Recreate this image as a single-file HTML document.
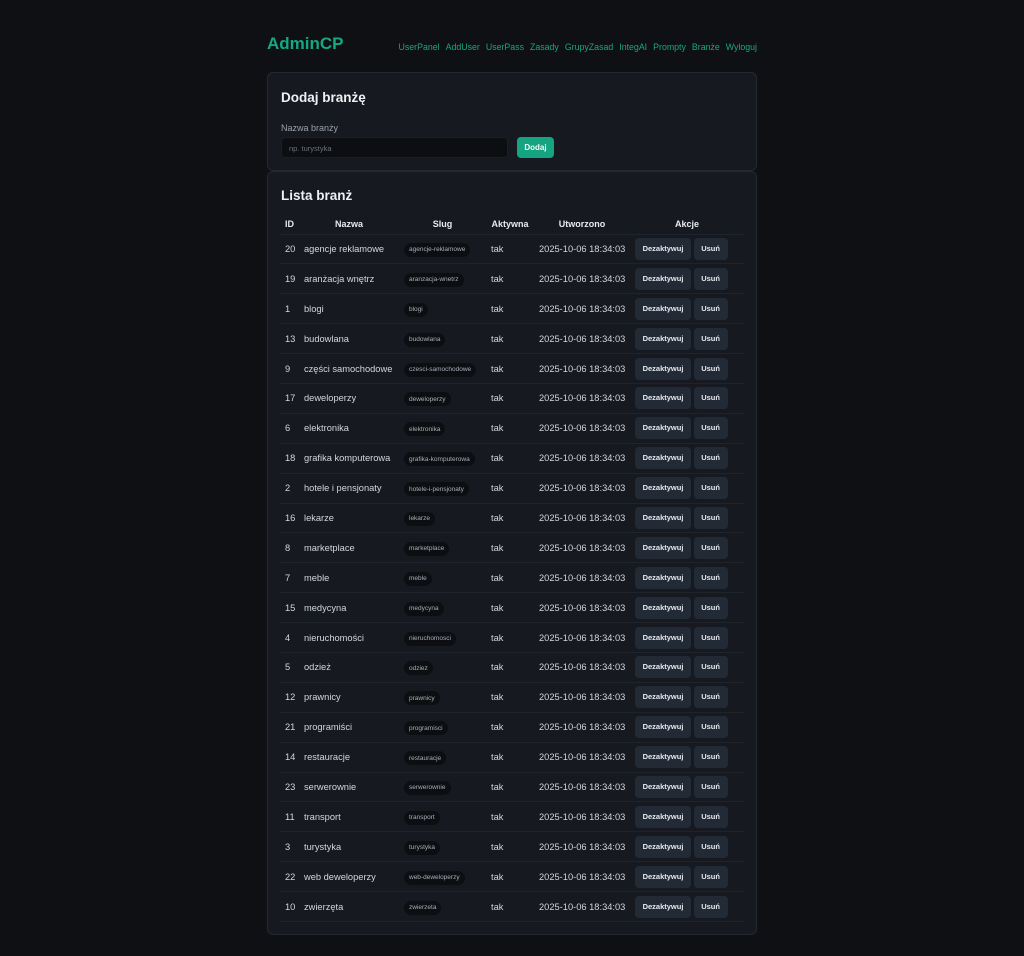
<!DOCTYPE html>
<html><head><meta charset="utf-8"><style>
*{box-sizing:border-box;margin:0;padding:0}
body{background:#0e1013;width:1024px;height:956px;font-family:"Liberation Sans","DejaVu Sans",sans-serif;color:#d6dae0;position:relative;overflow:hidden}
.logo{position:absolute;left:267px;top:34px;font-size:17px;font-weight:bold;color:#16a883}
.nav{position:absolute;right:267px;top:42px;font-size:8.8px;color:#16a883;display:flex;gap:6px;white-space:nowrap}
.card{position:absolute;left:267px;width:490px;background:#161a20;border:1px solid #232831;border-radius:6px}
h2{font-size:13.5px;font-weight:bold;color:#eef0f3}
.lbl{font-size:9px;color:#9aa1ab;position:absolute;left:13px;top:50px}
.inp{position:absolute;left:13px;top:64px;width:227px;height:21px;background:#0c0e11;border:1px solid #1b1f25;border-radius:4px;font-size:7.5px;color:#6d737c;padding:6px 7px}
.add{position:absolute;left:249px;top:64px;width:37px;height:21px;background:#15a480;border-radius:4px;font-size:8px;font-weight:bold;color:#f2fbf8;text-align:center;line-height:21px}
table{position:absolute;left:12px;top:42px;width:464px;border-collapse:collapse;table-layout:fixed;font-size:9.3px}
th{font-weight:bold;font-size:9px;color:#e8eaee;height:20px;text-align:center;border-bottom:1px solid #1f242b}
td{height:29.9px;padding:0 0 0 5px;border-bottom:1px solid #1f242b;white-space:nowrap;color:#d3d7dd;vertical-align:middle}
.slug{display:inline-flex;align-items:center;background:#0c0e11;border-radius:7px;font-size:6.5px;padding:0 5px;height:14px;color:#a9afb8;vertical-align:middle;position:relative;top:1px}
.b{display:inline-block;background:#222a36;border-radius:4px;font-size:7.5px;font-weight:bold;color:#e6e9ee;height:22px;line-height:22px;text-align:center;vertical-align:middle}
</style></head><body>
<div class="logo">AdminCP</div>
<div class="nav"><span>UserPanel</span><span>AddUser</span><span>UserPass</span><span>Zasady</span><span>GrupyZasad</span><span>IntegAI</span><span>Prompty</span><span>Branże</span><span>Wyloguj</span></div>
<div class="card" style="top:72px;height:99px">
<h2 style="position:absolute;left:13px;top:17px">Dodaj branżę</h2>
<div class="lbl">Nazwa branży</div>
<div class="inp">np. turystyka</div>
<div class="add">Dodaj</div>
</div>
<div class="card" style="top:171px;height:764px">
<h2 style="position:absolute;left:13px;top:16px">Lista branż</h2>
<table>
<colgroup><col style="width:19px"><col style="width:100px"><col style="width:87px"><col style="width:48px"><col style="width:96px"><col style="width:114px"></colgroup>
<tr><th>ID</th><th>Nazwa</th><th>Slug</th><th>Aktywna</th><th>Utworzono</th><th>Akcje</th></tr>
<tbody>
<tr><td>20</td><td>agencje reklamowe</td><td><span class="slug">agencje-reklamowe</span></td><td>tak</td><td>2025-10-06 18:34:03</td><td><span class="b" style="width:56px">Dezaktywuj</span> <span class="b" style="width:34px">Usuń</span></td></tr>
<tr><td>19</td><td>aranżacja wnętrz</td><td><span class="slug">aranzacja-wnetrz</span></td><td>tak</td><td>2025-10-06 18:34:03</td><td><span class="b" style="width:56px">Dezaktywuj</span> <span class="b" style="width:34px">Usuń</span></td></tr>
<tr><td>1</td><td>blogi</td><td><span class="slug">blogi</span></td><td>tak</td><td>2025-10-06 18:34:03</td><td><span class="b" style="width:56px">Dezaktywuj</span> <span class="b" style="width:34px">Usuń</span></td></tr>
<tr><td>13</td><td>budowlana</td><td><span class="slug">budowlana</span></td><td>tak</td><td>2025-10-06 18:34:03</td><td><span class="b" style="width:56px">Dezaktywuj</span> <span class="b" style="width:34px">Usuń</span></td></tr>
<tr><td>9</td><td>części samochodowe</td><td><span class="slug">czesci-samochodowe</span></td><td>tak</td><td>2025-10-06 18:34:03</td><td><span class="b" style="width:56px">Dezaktywuj</span> <span class="b" style="width:34px">Usuń</span></td></tr>
<tr><td>17</td><td>deweloperzy</td><td><span class="slug">deweloperzy</span></td><td>tak</td><td>2025-10-06 18:34:03</td><td><span class="b" style="width:56px">Dezaktywuj</span> <span class="b" style="width:34px">Usuń</span></td></tr>
<tr><td>6</td><td>elektronika</td><td><span class="slug">elektronika</span></td><td>tak</td><td>2025-10-06 18:34:03</td><td><span class="b" style="width:56px">Dezaktywuj</span> <span class="b" style="width:34px">Usuń</span></td></tr>
<tr><td>18</td><td>grafika komputerowa</td><td><span class="slug">grafika-komputerowa</span></td><td>tak</td><td>2025-10-06 18:34:03</td><td><span class="b" style="width:56px">Dezaktywuj</span> <span class="b" style="width:34px">Usuń</span></td></tr>
<tr><td>2</td><td>hotele i pensjonaty</td><td><span class="slug">hotele-i-pensjonaty</span></td><td>tak</td><td>2025-10-06 18:34:03</td><td><span class="b" style="width:56px">Dezaktywuj</span> <span class="b" style="width:34px">Usuń</span></td></tr>
<tr><td>16</td><td>lekarze</td><td><span class="slug">lekarze</span></td><td>tak</td><td>2025-10-06 18:34:03</td><td><span class="b" style="width:56px">Dezaktywuj</span> <span class="b" style="width:34px">Usuń</span></td></tr>
<tr><td>8</td><td>marketplace</td><td><span class="slug">marketplace</span></td><td>tak</td><td>2025-10-06 18:34:03</td><td><span class="b" style="width:56px">Dezaktywuj</span> <span class="b" style="width:34px">Usuń</span></td></tr>
<tr><td>7</td><td>meble</td><td><span class="slug">meble</span></td><td>tak</td><td>2025-10-06 18:34:03</td><td><span class="b" style="width:56px">Dezaktywuj</span> <span class="b" style="width:34px">Usuń</span></td></tr>
<tr><td>15</td><td>medycyna</td><td><span class="slug">medycyna</span></td><td>tak</td><td>2025-10-06 18:34:03</td><td><span class="b" style="width:56px">Dezaktywuj</span> <span class="b" style="width:34px">Usuń</span></td></tr>
<tr><td>4</td><td>nieruchomości</td><td><span class="slug">nieruchomosci</span></td><td>tak</td><td>2025-10-06 18:34:03</td><td><span class="b" style="width:56px">Dezaktywuj</span> <span class="b" style="width:34px">Usuń</span></td></tr>
<tr><td>5</td><td>odzież</td><td><span class="slug">odziez</span></td><td>tak</td><td>2025-10-06 18:34:03</td><td><span class="b" style="width:56px">Dezaktywuj</span> <span class="b" style="width:34px">Usuń</span></td></tr>
<tr><td>12</td><td>prawnicy</td><td><span class="slug">prawnicy</span></td><td>tak</td><td>2025-10-06 18:34:03</td><td><span class="b" style="width:56px">Dezaktywuj</span> <span class="b" style="width:34px">Usuń</span></td></tr>
<tr><td>21</td><td>programiści</td><td><span class="slug">programisci</span></td><td>tak</td><td>2025-10-06 18:34:03</td><td><span class="b" style="width:56px">Dezaktywuj</span> <span class="b" style="width:34px">Usuń</span></td></tr>
<tr><td>14</td><td>restauracje</td><td><span class="slug">restauracje</span></td><td>tak</td><td>2025-10-06 18:34:03</td><td><span class="b" style="width:56px">Dezaktywuj</span> <span class="b" style="width:34px">Usuń</span></td></tr>
<tr><td>23</td><td>serwerownie</td><td><span class="slug">serwerownie</span></td><td>tak</td><td>2025-10-06 18:34:03</td><td><span class="b" style="width:56px">Dezaktywuj</span> <span class="b" style="width:34px">Usuń</span></td></tr>
<tr><td>11</td><td>transport</td><td><span class="slug">transport</span></td><td>tak</td><td>2025-10-06 18:34:03</td><td><span class="b" style="width:56px">Dezaktywuj</span> <span class="b" style="width:34px">Usuń</span></td></tr>
<tr><td>3</td><td>turystyka</td><td><span class="slug">turystyka</span></td><td>tak</td><td>2025-10-06 18:34:03</td><td><span class="b" style="width:56px">Dezaktywuj</span> <span class="b" style="width:34px">Usuń</span></td></tr>
<tr><td>22</td><td>web deweloperzy</td><td><span class="slug">web-deweloperzy</span></td><td>tak</td><td>2025-10-06 18:34:03</td><td><span class="b" style="width:56px">Dezaktywuj</span> <span class="b" style="width:34px">Usuń</span></td></tr>
<tr><td>10</td><td>zwierzęta</td><td><span class="slug">zwierzeta</span></td><td>tak</td><td>2025-10-06 18:34:03</td><td><span class="b" style="width:56px">Dezaktywuj</span> <span class="b" style="width:34px">Usuń</span></td></tr>
</tbody></table>
</div>
</body></html>
